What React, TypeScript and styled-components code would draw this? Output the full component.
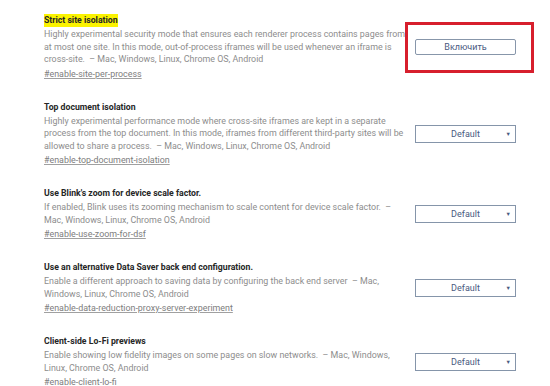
import styled, { createGlobalStyle } from "styled-components";

const GlobalStyle = createGlobalStyle`
  body {
    margin: 0;
    background: #ffffff;
    font-family: Roboto, "Noto Sans", sans-serif;
  }
`;

const Page = styled.div`
  padding: 14px 0 0 44px;
  display: flex;
  flex-direction: column;
`;

const Row = styled.div`
  display: flex;
  align-items: center;
  padding-bottom: 20.5px;
`;

const Info = styled.div`
  width: 361px;
  flex-shrink: 0;
  display: flex;
  flex-direction: column;
  align-items: flex-start;
`;

const Title = styled.div<{ $marked?: boolean }>`
  font-size: 8.7px;
  font-weight: 700;
  line-height: 13px;
  color: #262626;
  margin-bottom: 1px;
  background: ${(p) => (p.$marked ? "#fbf300" : "transparent")};
`;

const Desc = styled.div`
  font-size: 8.9px;
  line-height: 12.5px;
  color: #8d8d8d;
  white-space: pre;
`;

const Tag = styled.a`
  margin-top: 2px;
  font-size: 8.9px;
  line-height: 12.5px;
  color: #7d7d7d;
  text-decoration: underline;
  text-decoration-color: #a0a0a0;
`;

const Control = styled.div<{ $marked?: boolean }>`
  position: relative;
  margin-left: 10px;
  width: 101px;
  display: flex;

  &::after {
    content: "";
    display: ${(p) => (p.$marked ? "block" : "none")};
    position: absolute;
    left: -10px;
    right: -18px;
    top: -17px;
    bottom: -18px;
    border: 3px solid #d71f2d;
    pointer-events: none;
  }
`;

const Button = styled.button`
  width: 101px;
  height: 16px;
  padding: 0;
  border: 1px solid #8796aa;
  border-radius: 2px;
  background: #ffffff;
  color: #4a5a80;
  font-family: Roboto, sans-serif;
  font-size: 9px;
  line-height: 14px;
`;

const Select = styled.div`
  width: 101px;
  height: 18px;
  box-sizing: border-box;
  border: 1px solid #8595aa;
  background: #ffffff;
  display: flex;
  align-items: center;
  justify-content: center;
  position: relative;
  color: #4a5a80;
  font-size: 9px;
`;

const Arrow = styled.span`
  position: absolute;
  right: 4px;
  top: 5px;
  font-size: 5.5px;
  color: #4a5a80;
`;

type Flag = {
  title: string;
  lines: string[];
  tag: string;
  enable?: boolean;
};

const flags: Flag[] = [
  {
    title: "Strict site isolation",
    lines: [
      "Highly experimental security mode that ensures each renderer process contains pages from",
      "at most one site. In this mode, out-of-process iframes will be used whenever an iframe is",
      "cross-site.  – Mac, Windows, Linux, Chrome OS, Android",
    ],
    tag: "#enable-site-per-process",
    enable: true,
  },
  {
    title: "Top document isolation",
    lines: [
      "Highly experimental performance mode where cross-site iframes are kept in a separate",
      "process from the top document. In this mode, iframes from different third-party sites will be",
      "allowed to share a process.  – Mac, Windows, Linux, Chrome OS, Android",
    ],
    tag: "#enable-top-document-isolation",
  },
  {
    title: "Use Blink's zoom for device scale factor.",
    lines: [
      "If enabled, Blink uses its zooming mechanism to scale content for device scale factor.  –",
      "Mac, Windows, Linux, Chrome OS, Android",
    ],
    tag: "#enable-use-zoom-for-dsf",
  },
  {
    title: "Use an alternative Data Saver back end configuration.",
    lines: [
      "Enable a different approach to saving data by configuring the back end server  – Mac,",
      "Windows, Linux, Chrome OS, Android",
    ],
    tag: "#enable-data-reduction-proxy-server-experiment",
  },
  {
    title: "Client-side Lo-Fi previews",
    lines: [
      "Enable showing low fidelity images on some pages on slow networks.  – Mac, Windows,",
      "Linux, Chrome OS, Android",
    ],
    tag: "#enable-client-lo-fi",
  },
];

export default function App() {
  return (
    <>
      <GlobalStyle />
      <Page>
        {flags.map((f) => (
          <Row key={f.tag}>
            <Info>
              <Title $marked={f.enable}>{f.title}</Title>
              {f.lines.map((l) => (
                <Desc key={l}>{l}</Desc>
              ))}
              <Tag>{f.tag}</Tag>
            </Info>
            <Control $marked={f.enable}>
              {f.enable ? (
                <Button>Включить</Button>
              ) : (
                <Select>
                  Default
                  <Arrow>▼</Arrow>
                </Select>
              )}
            </Control>
          </Row>
        ))}
      </Page>
    </>
  );
}
